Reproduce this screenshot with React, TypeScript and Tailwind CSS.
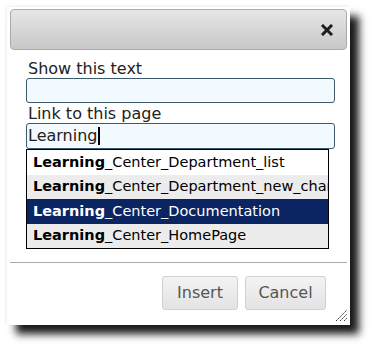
import React from "react";

const items = [
  { rest: "_Center_Department_list", bg: "bg-white text-black", h: "h-[25px]" },
  { rest: "_Center_Department_new_chart", bg: "bg-[#ececec] text-black", h: "h-[24px]" },
  { rest: "_Center_Documentation", bg: "bg-[#0b2462] text-white", h: "h-[25px]" },
  { rest: "_Center_HomePage", bg: "bg-[#ececec] text-black", h: "h-[24px]" },
];

export default function App() {
  return (
    <div className="w-[375px] h-[349px] bg-white pl-[7px] pt-[7px] font-['DejaVu_Sans',sans-serif]">
      <div className="relative w-[343px] h-[318px] bg-white shadow-[9px_9px_8px_rgba(0,0,0,0.9),-1px_-1px_3px_rgba(0,0,0,0.07)] px-[3px] pt-[2px]">
        {/* title bar */}
        <div className="h-[41px] rounded-[4px] border border-[#aaaaaa] bg-gradient-to-b from-[#e6e6e6] to-[#c8c8c8] flex items-center justify-end pr-[13px]">
          <svg width="12" height="12" viewBox="0 0 12 12">
            <path d="M2 2 L10 10 M10 2 L2 10" stroke="#1e1e1e" strokeWidth="3" strokeLinecap="square" />
          </svg>
        </div>

        <div className="pl-[16px] pt-[9px]">
          <div className="pl-[2px] text-[16px] leading-[19px] text-[#222]">Show this text</div>
          <div className="w-[309px] h-[25px] rounded-[3px] border border-[#3d5a6c] bg-[#f2faff]" />

          <div className="pl-[2px] mt-[1px] text-[16px] leading-[19px] text-[#222]">Link to this page</div>
          <div className="w-[309px] h-[26px] rounded-[3px] border border-[#3d5a6c] bg-[#f2faff] flex items-center pl-[1px] text-[16px] text-[#222]">
            Learning
            <span className="inline-block w-[2px] h-[18px] bg-black ml-[1px]" />
          </div>

          <div className="w-[303px] border border-black text-[14.5px]">
            {items.map((it, i) => (
              <div
                key={i}
                className={`${it.h} flex items-center pl-[6px] whitespace-nowrap overflow-hidden ${it.bg}`}
              >
                <span className="font-bold">Learning</span>
                {it.rest}
              </div>
            ))}
          </div>
        </div>

        <div className="mt-[13px] border-t border-[#aaaaaa]" />

        <div className="flex justify-end gap-[7px] pr-[21px] pt-[13px]">
          <button className="w-[76px] h-[34px] rounded-[3px] border border-[#d0d0d0] bg-gradient-to-b from-[#f3f3f3] to-[#e3e3e3] text-[16px] text-[#555]">
            Insert
          </button>
          <button className="w-[81px] h-[34px] rounded-[3px] border border-[#d0d0d0] bg-gradient-to-b from-[#f3f3f3] to-[#e3e3e3] text-[16px] text-[#555]">
            Cancel
          </button>
        </div>

        <svg className="absolute right-[2px] bottom-[3px]" width="13" height="13" viewBox="0 0 13 13">
          <path d="M1 12 L12 1 M5 12 L12 5 M9 12 L12 9" stroke="#333" strokeWidth="1" strokeDasharray="2 1" />
        </svg>
      </div>
    </div>
  );
}
